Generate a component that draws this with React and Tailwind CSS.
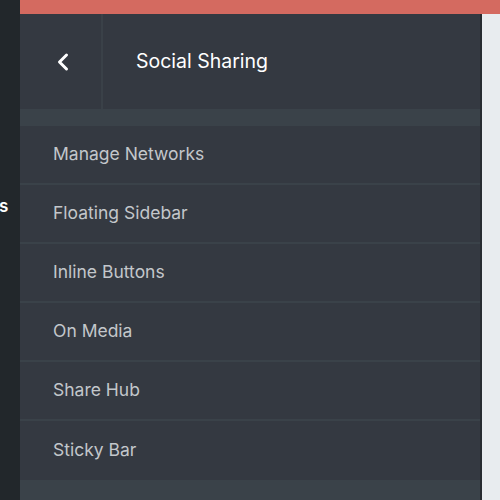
import React from "react";

const items = [
  "Manage Networks",
  "Floating Sidebar",
  "Inline Buttons",
  "On Media",
  "Share Hub",
  "Sticky Bar",
];

const BackIcon = () => (
  <svg width="14" height="20" viewBox="0 0 14 20" fill="none">
    <path
      d="M10.5 3 L3.5 10 L10.5 17"
      stroke="#ffffff"
      strokeWidth="3"
      strokeLinecap="round"
      strokeLinejoin="round"
    />
  </svg>
);

export default function App() {
  return (
    <div
      className="flex w-[500px] h-[500px] overflow-hidden bg-[#22272b]"
      style={{ fontFamily: "Inter, 'Noto Sans', sans-serif" }}
    >
      {/* left nav strip, mostly cut off */}
      <div className="w-[20px] shrink-0 bg-[#22272b] flex flex-col overflow-hidden">
        <div className="mt-[196px] text-white text-[17px] font-semibold leading-[20px] -ml-[1px]">
          s
        </div>
      </div>

      <div className="flex-1 flex flex-col">
        <div className="h-[14px] bg-[#d46a60] shrink-0" />
        <div className="flex flex-1">
          <div className="w-[462px] shrink-0 flex flex-col bg-[#343941] border-r-2 border-[#262b30]">
            {/* header */}
            <div className="h-[95px] flex shrink-0">
              <button className="w-[83px] pl-[5px] flex items-center justify-center border-r-2 border-[#3a4148]">
                <BackIcon />
              </button>
              <div className="flex items-center pl-[33px] text-white text-[19.5px] font-normal">
                Social Sharing
              </div>
            </div>
            <div className="h-[17px] bg-[#3a4249] shrink-0" />
            <ul className="flex flex-col">
              {items.map((label, i) => (
                <li
                  key={label}
                  className={
                    "h-[59px] flex items-center pl-[33px] text-[17.5px] text-[#c3c7cb] " +
                    (i < items.length - 1 ? "border-b-2 border-[#3a4249]" : "")
                  }
                >
                  {label}
                </li>
              ))}
            </ul>
            <div className="flex-1 bg-[#3a4249]" />
          </div>
          <div className="flex-1 bg-[#e8ecef]" />
        </div>
      </div>
    </div>
  );
}
